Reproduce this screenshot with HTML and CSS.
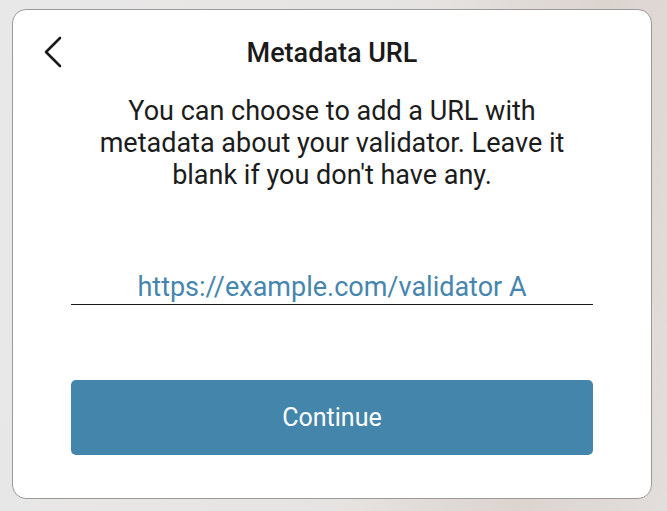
FILE: index.html
```html
<!DOCTYPE html>
<html lang="en">
<head>
<meta charset="utf-8">
<title>Metadata URL</title>
<link rel="stylesheet" href="styles.css">
</head>
<body>
<div class="page">
  <div class="card">
    <div class="header">
      <button class="back" aria-label="Back">
        <svg width="20" height="32" viewBox="0 0 20 32"><path d="M17 2 L3 16 L17 30" fill="none" stroke="#1a1a1a" stroke-width="2.6" stroke-linecap="round" stroke-linejoin="round"/></svg>
      </button>
      <h1 class="title">Metadata URL</h1>
    </div>
    <p class="desc">You can choose to add a URL with metadata about your validator. Leave it blank if you don't have any.</p>
    <div class="field">
      <input class="input" type="text" value="https://example.com/validator A">
    </div>
    <button class="continue">Continue</button>
  </div>
</div>
</body>
</html>
```
FILE: styles.css
```css
html, body {
  margin: 0;
  padding: 0;
  height: 100%;
}
body {
  font-family: Roboto, "Liberation Sans", sans-serif;
  background: linear-gradient(100deg, #e8e8e8 0%, #e6e4e2 55%, #dcd4cf 80%, #e2dedb 100%);
}
.page {
  padding: 9px 15px 12px 12px;
}
.card {
  background: #fff;
  border: 1px solid #9a9a9a;
  border-radius: 14px;
  padding: 21px 58px 43px;
  display: flex;
  flex-direction: column;
  height: 490px;
  box-sizing: border-box;
}
.header {
  position: relative;
  height: 44px;
  display: flex;
  align-items: center;
  justify-content: center;
}
.back {
  position: absolute;
  left: -28px;
  top: 5px;
  background: none;
  border: 0;
  padding: 0;
  width: 20px;
  height: 32px;
  cursor: pointer;
}
.back svg { display: block; }
.title {
  margin: 0;
  font-size: 27px;
  font-weight: 500;
  color: #1a1a1a;
}
.desc {
  margin: 20px auto 0;
  max-width: 500px;
  font-size: 27px;
  line-height: 32px;
  text-align: center;
  color: #1c1c1c;
}
.field {
  margin-top: 72px;
}
.input {
  display: block;
  width: 100%;
  box-sizing: border-box;
  height: 42px;
  border: 0;
  border-bottom: 1px solid #1a1a1a;
  outline: none;
  font-family: inherit;
  font-size: 27px;
  color: #4686ae;
  text-align: center;
  padding: 6px 0 0;
  background: transparent;
}
.continue {
  margin-top: 75px;
  height: 75px;
  border: 0;
  border-radius: 5px;
  background: #4485ab;
  color: #fff;
  font-family: inherit;
  font-size: 25px;
  cursor: pointer;
}
```
